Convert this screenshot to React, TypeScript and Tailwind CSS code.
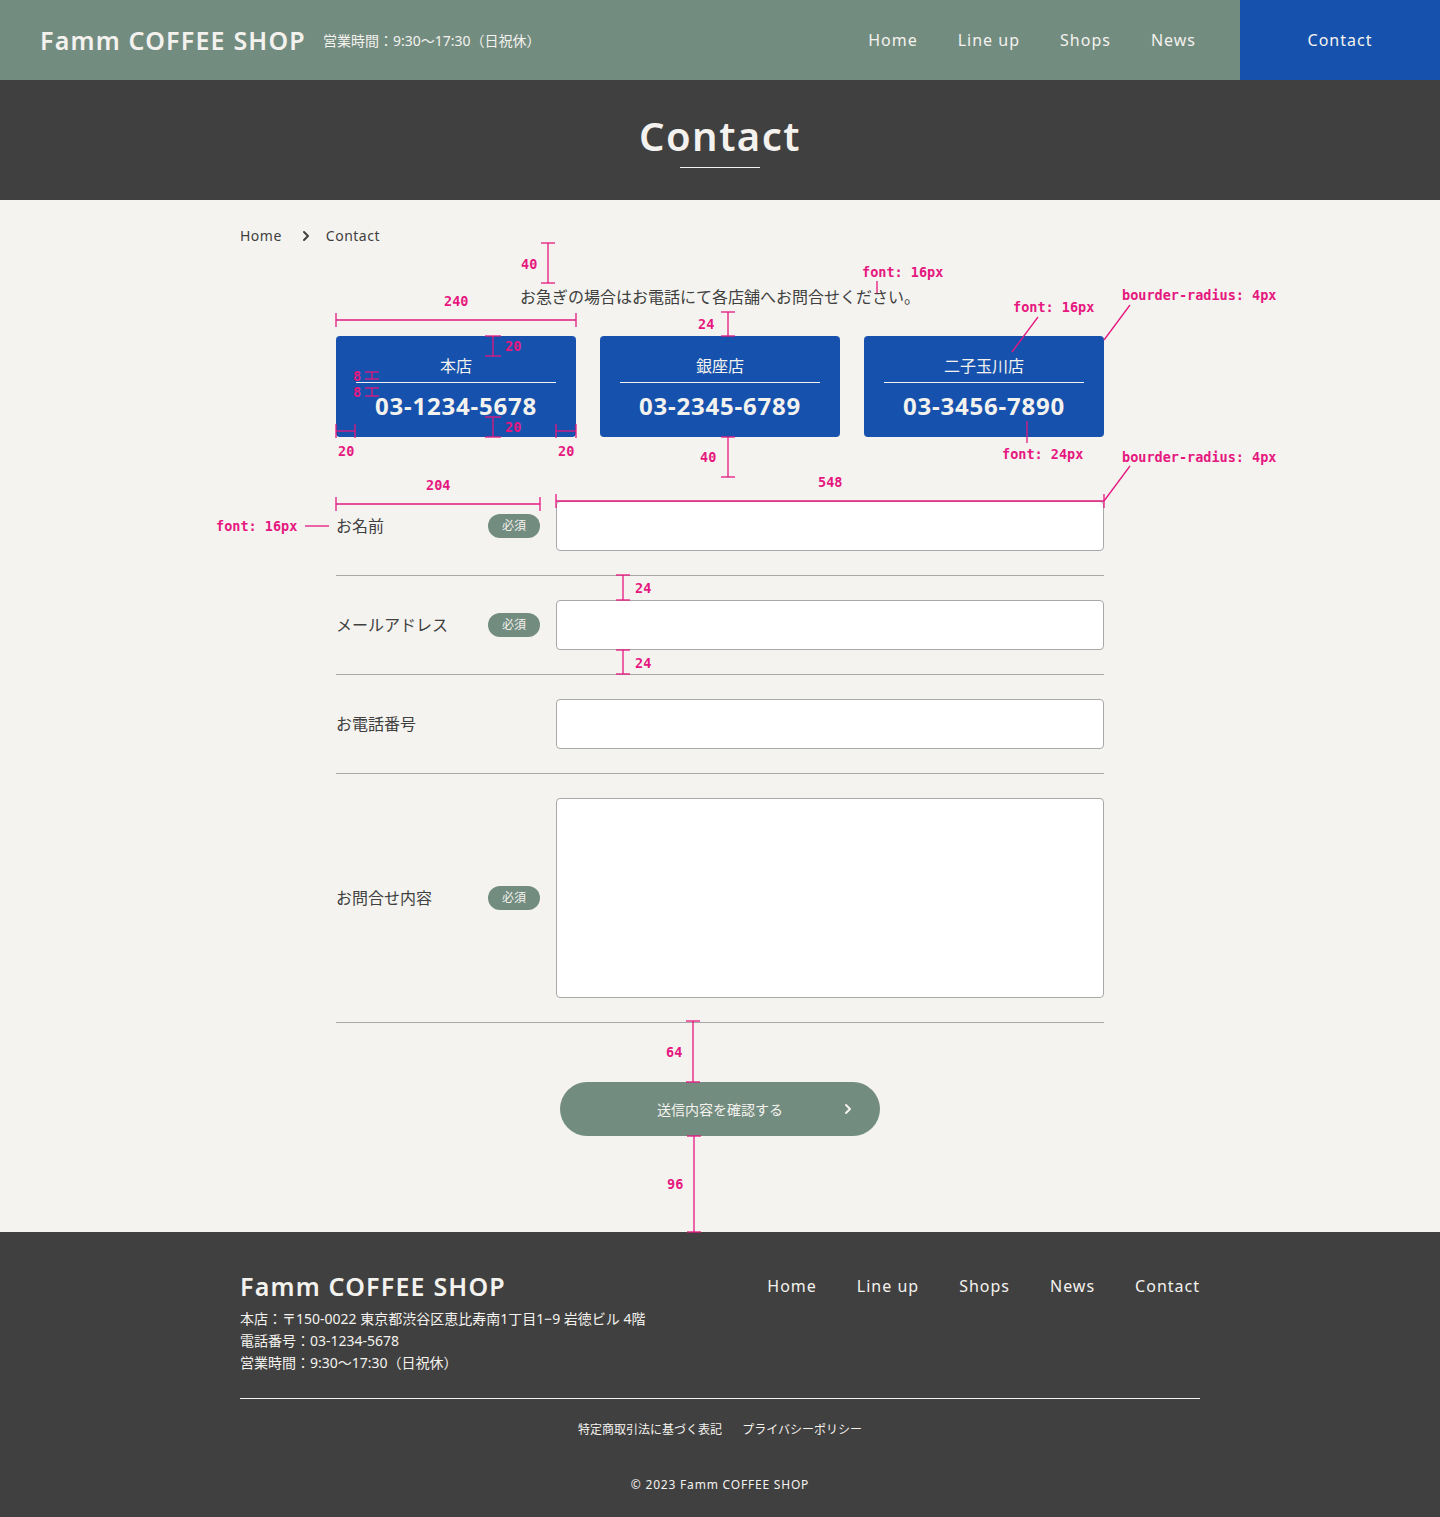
import { ChevronRight } from 'lucide-react';

// Contact page spec — page layout plus the pink measurement overlay.

const NAV = ['Home', 'Line up', 'Shops', 'News'];

const SHOPS = [
  { name: '本店', tel: '03-1234-5678' },
  { name: '銀座店', tel: '03-2345-6789' },
  { name: '二子玉川店', tel: '03-3456-7890' },
];

const FIELDS = [
  { label: 'お名前', required: true, tall: false },
  { label: 'メールアドレス', required: true, tall: false },
  { label: 'お電話番号', required: false, tall: false },
  { label: 'お問合せ内容', required: true, tall: true },
];

// annotation labels: [text, left, centerY]
const LABELS: [string, number, number][] = [
  ['40', 521, 264],
  ['font: 16px', 862, 272],
  ['240', 444, 301],
  ['24', 698, 324],
  ['font: 16px', 1013, 307],
  ['bourder-radius: 4px', 1122, 295],
  ['20', 505, 346],
  ['8', 353, 376],
  ['8', 353, 392],
  ['20', 505, 427],
  ['20', 338, 451],
  ['20', 558, 451],
  ['40', 700, 457],
  ['font: 24px', 1002, 454],
  ['bourder-radius: 4px', 1122, 457],
  ['204', 426, 485],
  ['548', 818, 482],
  ['font: 16px', 216, 526],
  ['24', 635, 588],
  ['24', 635, 663],
  ['64', 666, 1052],
  ['96', 667, 1184],
];

// vertical dimension bars: [x, y1, y2, capHalf]
const VDIMS: [number, number, number, number][] = [
  [548, 243, 283, 7],
  [728, 312, 336, 7],
  [493, 336, 356, 8],
  [372, 372, 379, 7],
  [372, 388, 396, 7],
  [493, 417, 437, 8],
  [728, 437, 477, 7],
  [623, 575, 600, 7],
  [623, 650, 674, 7],
  [693, 1021, 1082, 7],
  [694, 1136, 1232, 7],
];

// horizontal dimension bars: [y, x1, x2, tickHalf]
const HDIMS: [number, number, number, number][] = [
  [320, 336, 576, 7],
  [431, 336, 355, 7],
  [431, 556, 576, 7],
  [504, 336, 540, 7],
  [501, 556, 1104, 7],
];

// plain leader lines: [x1, y1, x2, y2]
const LEADERS: [number, number, number, number][] = [
  [877, 281, 877, 293],
  [1038, 317, 1012, 352],
  [1130, 305, 1104, 340],
  [1027, 421, 1027, 443],
  [1130, 466, 1104, 501],
  [305, 526, 329, 526],
];

const PINK = '#e6177f';

function Overlay() {
  return (
    <div className="pointer-events-none absolute inset-0">
      <svg className="absolute left-0 top-0" width={1440} height={1517} fill="none" stroke={PINK} strokeWidth={1.3}>
        {VDIMS.map(([x, a, b, c], i) => (
          <g key={`v${i}`}>
            <line x1={x} y1={a} x2={x} y2={b} />
            <line x1={x - c} y1={a} x2={x + c} y2={a} />
            <line x1={x - c} y1={b} x2={x + c} y2={b} />
          </g>
        ))}
        {HDIMS.map(([y, a, b, c], i) => (
          <g key={`h${i}`}>
            <line x1={a} y1={y} x2={b} y2={y} />
            <line x1={a} y1={y - c} x2={a} y2={y + c} />
            <line x1={b} y1={y - c} x2={b} y2={y + c} />
          </g>
        ))}
        {LEADERS.map(([x1, y1, x2, y2], i) => (
          <line key={`l${i}`} x1={x1} y1={y1} x2={x2} y2={y2} />
        ))}
      </svg>
      {LABELS.map(([t, x, y], i) => (
        <div
          key={i}
          className="absolute whitespace-pre font-['DejaVu_Sans_Mono',monospace] text-[13.5px] font-bold leading-4 text-[#e6177f]"
          style={{ left: x, top: y - 8 }}
        >
          {t}
        </div>
      ))}
    </div>
  );
}

function Header() {
  return (
    <header className="flex h-20 items-center bg-[#738c80] pl-10 text-[#f4f2ee]">
      <div className="text-[25px] font-semibold leading-8 tracking-[1.2px]">Famm COFFEE SHOP</div>
      <div className="ml-[17px] text-[14px]">営業時間：9:30〜17:30（日祝休）</div>
      <nav className="ml-auto flex gap-10 text-[16px] tracking-[1px]">
        {NAV.map(n => (
          <a key={n}>{n}</a>
        ))}
      </nav>
      <a className="ml-[44px] flex h-full w-[200px] items-center justify-center bg-[#1652ad] text-[16px] tracking-[1px]">
        Contact
      </a>
    </header>
  );
}

function Hero() {
  return (
    <section className="flex h-[120px] flex-col items-center justify-center bg-[#404040] text-[#f4f2ee]">
      <h1 className="text-[40px] font-semibold leading-[48px] tracking-[1.5px]">Contact</h1>
      <div className="mt-[7px] h-px w-20 bg-[#f4f2ee]" />
    </section>
  );
}

function ShopCard({ name, tel }: { name: string; tel: string }) {
  return (
    <div className="flex w-[240px] flex-col rounded bg-[#1652ad] px-5 pb-[19px] pt-5 text-center text-[#f4f2ee]">
      <div className="text-[16px] leading-5">{name}</div>
      <div className="mt-[6px] h-px bg-[#f4f2ee]" />
      <div className="mt-[11px] text-[24px] font-bold leading-6 tracking-[0.8px]">{tel}</div>
    </div>
  );
}

function Field({ label, required, tall }: { label: string; required: boolean; tall: boolean }) {
  return (
    <div className="flex items-center gap-4 border-b border-[#a8a8a8] py-6">
      <div className="flex w-[204px] items-center justify-between">
        <span className="text-[16px]">{label}</span>
        {required && (
          <span className="flex h-6 w-[52px] items-center justify-center rounded-full bg-[#738c80] text-[12px] text-[#f4f2ee]">
            必須
          </span>
        )}
      </div>
      <div className={`${tall ? 'h-[200px]' : 'h-[50px]'} w-[548px] rounded border border-[#a8a8a8] bg-white`} />
    </div>
  );
}

function Footer() {
  return (
    <footer className="bg-[#404040] px-[240px] pb-[22px] pt-[38px] text-[#f4f2ee]">
      <div className="flex justify-between">
        <div>
          <div className="text-[25px] font-semibold leading-8 tracking-[1.2px]">Famm COFFEE SHOP</div>
          <div className="mt-[6px] text-[14px] leading-[22px]">
            <p>本店：〒150-0022 東京都渋谷区恵比寿南1丁目1−9 岩徳ビル 4階</p>
            <p>電話番号：03-1234-5678</p>
            <p>営業時間：9:30〜17:30（日祝休）</p>
          </div>
        </div>
        <nav className="flex gap-10 text-[16px] leading-8 tracking-[1px]">
          {[...NAV, 'Contact'].map(n => (
            <a key={n}>{n}</a>
          ))}
        </nav>
      </div>
      <div className="mt-6 h-px bg-[#f4f2ee]" />
      <div className="mt-[21px] flex justify-center gap-5 text-[12px] leading-5">
        <a>特定商取引法に基づく表記</a>
        <a>プライバシーポリシー</a>
      </div>
      <div className="mt-[35px] text-center text-[12px] leading-5 tracking-[0.8px]">© 2023 Famm COFFEE SHOP</div>
    </footer>
  );
}

export default function App() {
  return (
    <div className="relative w-[1440px] bg-[#f4f3ef] font-['Noto_Sans','Noto_Sans_CJK_JP',sans-serif] text-[#404040]">
      <Header />
      <Hero />
      <main className="mx-auto w-[960px] pt-[26px]">
        <div className="flex items-center text-[14px] leading-5 tracking-[0.5px]">
          <span>Home</span>
          <ChevronRight className="ml-[16px] mr-[12px] h-4 w-4" strokeWidth={3} />
          <span>Contact</span>
        </div>
        <div className="mx-auto w-[768px]">
          <p className="mt-[37px] text-center text-[16px] leading-7">
            お急ぎの場合はお電話にて各店舗へお問合せください。
          </p>
          <div className="mt-[25px] flex gap-6">
            {SHOPS.map(s => (
              <ShopCard key={s.name} {...s} />
            ))}
          </div>
          <form className="mt-10">
            {FIELDS.map(f => (
              <Field key={f.label} {...f} />
            ))}
          </form>
          <div className="mb-24 mt-[59px] flex justify-center">
            <button className="relative flex h-[54px] w-[320px] items-center justify-center rounded-full bg-[#738c80] text-[14px] text-[#f4f2ee]">
              送信内容を確認する
              <ChevronRight className="absolute right-6 h-4 w-4" strokeWidth={3} />
            </button>
          </div>
        </div>
      </main>
      <Footer />
      <Overlay />
    </div>
  );
}
